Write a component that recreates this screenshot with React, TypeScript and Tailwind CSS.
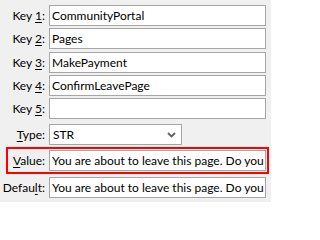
import React from "react";

type FieldProps = {
  value: string;
};

function TextBox({ value }: FieldProps) {
  return (
    <div className="flex-1 h-[21px] min-w-0 bg-white border border-[#a6a6a6] flex items-center pl-[2px] overflow-hidden whitespace-nowrap">
      <span className="leading-none">{value}</span>
    </div>
  );
}

function Label({ pre, key_, post, width }: { pre: string; key_: string; post: string; width: string }) {
  return (
    <div className={`${width} shrink-0 text-right pr-[4px] whitespace-nowrap`}>
      {pre}
      <span className="underline underline-offset-2">{key_}</span>
      {post}
    </div>
  );
}

export default function App() {
  const keys = [
    { n: "1", v: "CommunityPortal", mt: "mt-[5px]" },
    { n: "2", v: "Pages", mt: "mt-[2px]" },
    { n: "3", v: "MakePayment", mt: "mt-[3px]" },
    { n: "4", v: "ConfirmLeavePage", mt: "mt-[2px]" },
    { n: "5", v: "", mt: "mt-[2px]" },
  ];
  const msg = "You are about to leave this page. Do you wish to continue?";

  return (
    <div className="w-[271px] h-[202px] bg-[#f0f0f0] text-[12px] text-black overflow-hidden font-['Lato',sans-serif]">
      <div className="flex flex-col">
        {keys.map((k) => (
          <div key={k.n} className={`flex items-center pr-[5px] ${k.mt}`}>
            <Label pre="Key " key_={k.n} post=":" width="w-[49px]" />
            <TextBox value={k.v} />
          </div>
        ))}

        <div className="flex items-center mt-[5px]">
          <Label pre="" key_="T" post="ype:" width="w-[49px]" />
          <div className="w-[133px] h-[21px] bg-white border border-[#a6a6a6] flex items-center justify-between pl-[3px] pr-[5px]">
            <span className="leading-none">STR</span>
            <svg width="9" height="6" viewBox="0 0 9 6">
              <path d="M1 1 L4.5 4.5 L8 1" fill="none" stroke="#606060" strokeWidth="1.8" />
            </svg>
          </div>
        </div>

        <div className="mt-[2px] ml-[6px] mr-[2px] border-2 border-[#ff0000] p-[1px]">
          <div className="flex items-center">
            <Label pre="" key_="V" post="alue:" width="w-[40px]" />
            <TextBox value={msg} />
          </div>
        </div>

        <div className="flex items-center pr-[5px] mt-[3px]">
          <Label pre="Defau" key_="l" post="t:" width="w-[49px]" />
          <TextBox value={msg} />
        </div>
      </div>
    </div>
  );
}
